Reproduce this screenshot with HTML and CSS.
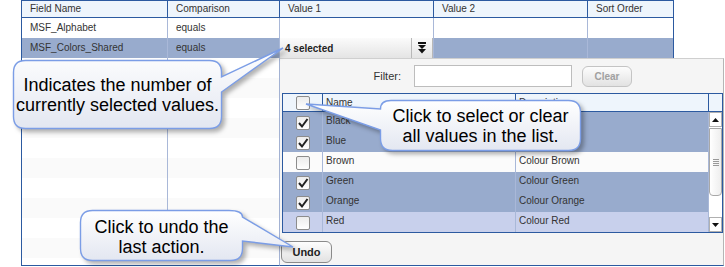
FILE: index.html
```html
<!DOCTYPE html>
<html lang="en">
<head>
    <meta charset="UTF-8">
    <title>Filter values</title>
    <link rel="stylesheet" href="styles.css">
</head>
<body>
<div class="page">

    <div class="grid">
        <div class="row head">
            <div class="cell c1">Field Name</div>
            <div class="cell c2">Comparison</div>
            <div class="cell c3">Value 1</div>
            <div class="cell c4">Value 2</div>
            <div class="cell c5">Sort Order</div>
        </div>
        <div class="row">
            <div class="cell c1">MSF_Alphabet</div>
            <div class="cell c2">equals</div>
            <div class="cell c3"></div>
            <div class="cell c4"></div>
            <div class="cell c5"></div>
        </div>
        <div class="row selected">
            <div class="cell c1">MSF_Colors_Shared</div>
            <div class="cell c2">equals</div>
            <div class="cell c3 combo-cell">
                <div class="combo">
                    <span class="combo-text">4 selected</span>
                    <span class="combo-btn">
                        <svg width="8" height="12" viewBox="0 0 8 12">
                            <rect x="0" y="0" width="8" height="2" fill="#111"/>
                            <path d="M0 3 H8 L4 7 Z" fill="#111"/>
                            <path d="M0 7 H8 L4 11.5 Z" fill="#111"/>
                        </svg>
                    </span>
                </div>
            </div>
            <div class="cell c4"></div>
            <div class="cell c5"></div>
        </div>
        <div class="row"><div class="cell c1"></div><div class="cell c2"></div><div class="cell c3"></div><div class="cell c4"></div><div class="cell c5"></div></div>
        <div class="row"><div class="cell c1"></div><div class="cell c2"></div><div class="cell c3"></div><div class="cell c4"></div><div class="cell c5"></div></div>
        <div class="row"><div class="cell c1"></div><div class="cell c2"></div><div class="cell c3"></div><div class="cell c4"></div><div class="cell c5"></div></div>
        <div class="row"><div class="cell c1"></div><div class="cell c2"></div><div class="cell c3"></div><div class="cell c4"></div><div class="cell c5"></div></div>
        <div class="row"><div class="cell c1"></div><div class="cell c2"></div><div class="cell c3"></div><div class="cell c4"></div><div class="cell c5"></div></div>
        <div class="row"><div class="cell c1"></div><div class="cell c2"></div><div class="cell c3"></div><div class="cell c4"></div><div class="cell c5"></div></div>
        <div class="row"><div class="cell c1"></div><div class="cell c2"></div><div class="cell c3"></div><div class="cell c4"></div><div class="cell c5"></div></div>
        <div class="row"><div class="cell c1"></div><div class="cell c2"></div><div class="cell c3"></div><div class="cell c4"></div><div class="cell c5"></div></div>
        <div class="row"><div class="cell c1"></div><div class="cell c2"></div><div class="cell c3"></div><div class="cell c4"></div><div class="cell c5"></div></div>
        <div class="row"><div class="cell c1"></div><div class="cell c2"></div><div class="cell c3"></div><div class="cell c4"></div><div class="cell c5"></div></div>
    </div>

    <!-- dropdown panel of the Value 1 combo -->
    <div class="popup">
        <div class="filter-row">
            <label class="filter-label" for="filter">Filter:</label>
            <input class="filter-input" id="filter" type="text">
            <button class="btn btn-clear" disabled>Clear</button>
        </div>

        <div class="list">
            <div class="list-head">
                <div class="lc lc1"><span class="check"></span></div>
                <div class="lc lc2">Name</div>
                <div class="lc lc3">Description</div>
                <div class="lc lc4"></div>
            </div>
            <div class="list-body">
                <div class="list-rows">
                    <div class="lrow on">
                        <div class="lc lc1"><span class="check checked"><svg width="12" height="12" viewBox="0 0 12 12"><path d="M2 6 L5 9.5 L10.5 2" fill="none" stroke="#222" stroke-width="2"/></svg></span></div>
                        <div class="lc lc2">Black</div>
                        <div class="lc lc3">Colour Black</div>
                    </div>
                    <div class="lrow on">
                        <div class="lc lc1"><span class="check checked"><svg width="12" height="12" viewBox="0 0 12 12"><path d="M2 6 L5 9.5 L10.5 2" fill="none" stroke="#222" stroke-width="2"/></svg></span></div>
                        <div class="lc lc2">Blue</div>
                        <div class="lc lc3">Colour Blue</div>
                    </div>
                    <div class="lrow">
                        <div class="lc lc1"><span class="check"></span></div>
                        <div class="lc lc2">Brown</div>
                        <div class="lc lc3">Colour Brown</div>
                    </div>
                    <div class="lrow on">
                        <div class="lc lc1"><span class="check checked"><svg width="12" height="12" viewBox="0 0 12 12"><path d="M2 6 L5 9.5 L10.5 2" fill="none" stroke="#222" stroke-width="2"/></svg></span></div>
                        <div class="lc lc2">Green</div>
                        <div class="lc lc3">Colour Green</div>
                    </div>
                    <div class="lrow on">
                        <div class="lc lc1"><span class="check checked"><svg width="12" height="12" viewBox="0 0 12 12"><path d="M2 6 L5 9.5 L10.5 2" fill="none" stroke="#222" stroke-width="2"/></svg></span></div>
                        <div class="lc lc2">Orange</div>
                        <div class="lc lc3">Colour Orange</div>
                    </div>
                    <div class="lrow hover">
                        <div class="lc lc1"><span class="check"></span></div>
                        <div class="lc lc2">Red</div>
                        <div class="lc lc3">Colour Red</div>
                    </div>
                </div>
                <div class="scrollbar">
                    <div class="sb-btn">
                        <svg width="7" height="4" viewBox="0 0 7 4"><path d="M0 4 H7 L3.5 0 Z" fill="#111"/></svg>
                    </div>
                    <div class="sb-track">
                        <div class="sb-thumb">
                            <svg width="6" height="9" viewBox="0 0 6 9"><path d="M0 1.5 H6 M0 3.5 H6 M0 5.5 H6 M0 7.5 H6" stroke="#999" stroke-width="1"/></svg>
                        </div>
                    </div>
                    <div class="sb-btn">
                        <svg width="7" height="4" viewBox="0 0 7 4"><path d="M0 0 H7 L3.5 4 Z" fill="#111"/></svg>
                    </div>
                </div>
            </div>
        </div>

        <button class="btn btn-undo">Undo</button>
    </div>

    <!-- help callouts -->
    <div class="callout callout-count">
        <svg class="bubble" width="285" height="95" viewBox="0 0 285 95">
            <defs>
                <linearGradient id="g1" x1="0" y1="0" x2="0" y2="1">
                    <stop offset="0" stop-color="#ffffff"/>
                    <stop offset="1" stop-color="#e3e7f1"/>
                </linearGradient>
            </defs>
            <path d="M15.5 15.5 H199.5 Q211.5 15.5 211.5 27.5 V32 L273 3 L211.5 47 V71.5 Q211.5 83.5 199.5 83.5 H15.5 Q3.5 83.5 3.5 71.5 V27.5 Q3.5 15.5 15.5 15.5 Z" fill="url(#g1)" stroke="#7b9de6" stroke-width="1.4"/>
        </svg>
        <div class="callout-text">Indicates the number of<br>currently selected values.</div>
    </div>

    <div class="callout callout-all">
        <svg class="bubble" width="295" height="65" viewBox="0 0 295 65">
            <defs>
                <linearGradient id="g2" x1="0" y1="0" x2="0" y2="1">
                    <stop offset="0" stop-color="#ffffff"/>
                    <stop offset="1" stop-color="#e3e7f1"/>
                </linearGradient>
            </defs>
            <path d="M96 5.5 H273.5 Q285.5 5.5 285.5 17.5 V43.5 Q285.5 55.5 273.5 55.5 H97.5 Q85.5 55.5 85.5 43.5 V35 L11 9 L85.5 14 Q85.5 5.5 96 5.5 Z" fill="url(#g2)" stroke="#7b9de6" stroke-width="1.4"/>
        </svg>
        <div class="callout-text">Click to select or clear<br>all values in the list.</div>
    </div>

    <div class="callout callout-undo">
        <svg class="bubble" width="220" height="62" viewBox="0 0 220 62">
            <defs>
                <linearGradient id="g3" x1="0" y1="0" x2="0" y2="1">
                    <stop offset="0" stop-color="#ffffff"/>
                    <stop offset="1" stop-color="#e3e7f1"/>
                </linearGradient>
            </defs>
            <path d="M15.5 5.5 H152 Q165.5 5.5 165.5 12 L216 42 L165.5 36 V43.5 Q165.5 55.5 153.5 55.5 H15.5 Q3.5 55.5 3.5 43.5 V17.5 Q3.5 5.5 15.5 5.5 Z" fill="url(#g3)" stroke="#7b9de6" stroke-width="1.4"/>
        </svg>
        <div class="callout-text">Click to undo the<br>last action.</div>
    </div>

</div>
</body>
</html>
```

FILE: styles.css
```css
body {
    margin: 0;
    padding: 0;
    background-color: white;
    font-family: "Liberation Sans", Arial, sans-serif;
    font-size: 10px;
    color: #333;
}

.page {
    position: relative;
    width: 725px;
    height: 267px;
    overflow: hidden;
}

/* main criteria grid */
.grid {
    margin-left: 21px;
    width: 653px;
    height: 266px;
    box-sizing: border-box;
    border-left: 1px solid #2c5aa0;
    border-right: 1px solid #2c5aa0;
    border-bottom: 1px solid #2c5aa0;
    overflow: hidden;
}

.row {
    display: flex;
    height: 20px;
}

.row:nth-child(odd) {
    background-color: #fafafa;
}

.row.head {
    height: 18px;
    box-sizing: border-box;
    border-top: 1px solid #2c5aa0;
    border-bottom: 1px solid #2c5aa0;
    background-color: #eef5fc;
}

.row.selected {
    background-color: #98abcd;
}

.cell {
    box-sizing: border-box;
    padding-left: 8px;
    line-height: 19px;
    border-right: 1px solid #a9b8d8;
    white-space: nowrap;
    overflow: hidden;
}

.row.head .cell {
    line-height: 16px;
    border-right-color: #2c5aa0;
}

.c1 { width: 146px; }
.c2 { width: 112px; }
.c3 { width: 154px; }
.c4 { width: 154px; }
.c5 { width: 85px; border-right: none; }

.combo-cell {
    padding-left: 0;
}

.combo {
    display: flex;
    height: 20px;
    background: linear-gradient(#fbfbfb, #e4e4e4);
    border-right: 1px solid #b8b8b8;
}

.combo-text {
    flex: 1;
    padding-left: 5px;
    font-weight: bold;
    line-height: 21px;
    color: #222;
}

.combo-btn {
    width: 20px;
    display: flex;
    align-items: center;
    justify-content: center;
    border-left: 1px solid #b8b8b8;
}

/* dropdown panel */
.popup {
    position: absolute;
    left: 279px;
    top: 58px;
    width: 445px;
    height: 208px;
    box-sizing: border-box;
    background-color: #f5f5f5;
    border-left: 1px solid #a3b2d3;
    border-top: 1px solid #cfcfcf;
    border-right: 1px solid #b5b5b5;
    border-bottom: 1px solid #2c5aa0;
}

.filter-row {
    display: flex;
    align-items: center;
    height: 22px;
    margin-top: 6px;
}

.filter-label {
    width: 121px;
    text-align: right;
    font-size: 11px;
    color: #333;
}

.filter-input {
    margin-left: 13px;
    width: 158px;
    height: 22px;
    box-sizing: border-box;
    border: 1px solid #bdbdbd;
    background: white;
    padding: 0;
}

.btn {
    font-family: "Liberation Sans", Arial, sans-serif;
    font-weight: bold;
    height: 22px;
    box-sizing: border-box;
    border-radius: 6px;
    padding: 0;
    background: linear-gradient(#fdfdfd, #e2e2e2);
}

.btn-clear {
    margin-left: 10px;
    width: 50px;
    height: 21px;
    font-size: 10px;
    border: 1px solid #c4c4c4;
    color: #a0a0a0;
}

.btn-undo {
    display: block;
    margin: 8px 0 0 1px;
    width: 51px;
    font-size: 11px;
    border: 1px solid #8a8a8a;
    color: #222;
}

.list {
    margin: 6px 0 0 2px;
    width: 441px;
    box-sizing: border-box;
    border: 1px solid #2c5aa0;
    background-color: white;
}

.list-head {
    display: flex;
    height: 18px;
    box-sizing: border-box;
    border-bottom: 1px solid #2c5aa0;
    background-color: #eef5fc;
}

.lc {
    box-sizing: border-box;
    padding-left: 3px;
    white-space: nowrap;
    overflow: hidden;
}

.list-head .lc {
    line-height: 17px;
    border-right: 1px solid #2c5aa0;
}

.lc1 {
    width: 40px;
    padding-left: 0;
    display: flex;
    justify-content: center;
    align-items: center;
}

.lc2 { width: 193px; }
.lc3 { width: 193px; }
.lc4 { width: 13px; border-right: none !important; }

.list-body {
    display: flex;
    height: 120px;
}

.list-rows {
    width: 426px;
}

.lrow {
    display: flex;
    height: 20px;
    background-color: #fbfbfb;
}

.lrow .lc {
    line-height: 18px;
    border-right: 1px solid #a9b8d8;
}

.lrow .lc1 {
    padding-top: 2px;
}

.lrow.on {
    background-color: #98abcd;
}

.lrow.hover {
    background-color: #c8d0ec;
}

.check {
    display: flex;
    align-items: center;
    justify-content: center;
    width: 14px;
    height: 14px;
    box-sizing: border-box;
    border: 1px solid #8c8c8c;
    border-radius: 2px;
    background: linear-gradient(#ececec, #ffffff);
}

.scrollbar {
    width: 13px;
    display: flex;
    flex-direction: column;
    background-color: white;
}

.sb-btn {
    height: 15px;
    box-sizing: border-box;
    border: 1px solid #b0b0b0;
    background-color: white;
    display: flex;
    align-items: center;
    justify-content: center;
}

.sb-track {
    flex: 1;
    padding-top: 1px;
}

.sb-thumb {
    height: 68px;
    box-sizing: border-box;
    border: 1px solid #a8a8a8;
    border-radius: 0 0 4px 4px;
    background: linear-gradient(to right, #ffffff, #eeeeee);
    display: flex;
    align-items: center;
    justify-content: center;
}

/* help callouts */
.callout {
    position: absolute;
}

.callout .bubble {
    display: block;
    filter: drop-shadow(3px 3px 2px rgba(0, 0, 0, 0.3));
}

.callout-text {
    position: absolute;
    display: flex;
    align-items: center;
    justify-content: center;
    text-align: center;
    font-family: "Liberation Sans", Arial, sans-serif;
    font-size: 18px;
    line-height: 20px;
    color: #000;
}

.callout-count {
    left: 10px;
    top: 45px;
    width: 285px;
    height: 95px;
}

.callout-count .callout-text {
    left: 3px;
    top: 15px;
    width: 209px;
    height: 69px;
}

.callout-all {
    left: 295px;
    top: 95px;
    width: 295px;
    height: 65px;
}

.callout-all .callout-text {
    left: 85px;
    top: 5px;
    width: 201px;
    height: 51px;
}

.callout-undo {
    left: 77px;
    top: 205px;
    width: 220px;
    height: 62px;
}

.callout-undo .callout-text {
    left: 3px;
    top: 6px;
    width: 163px;
    height: 51px;
}
```
